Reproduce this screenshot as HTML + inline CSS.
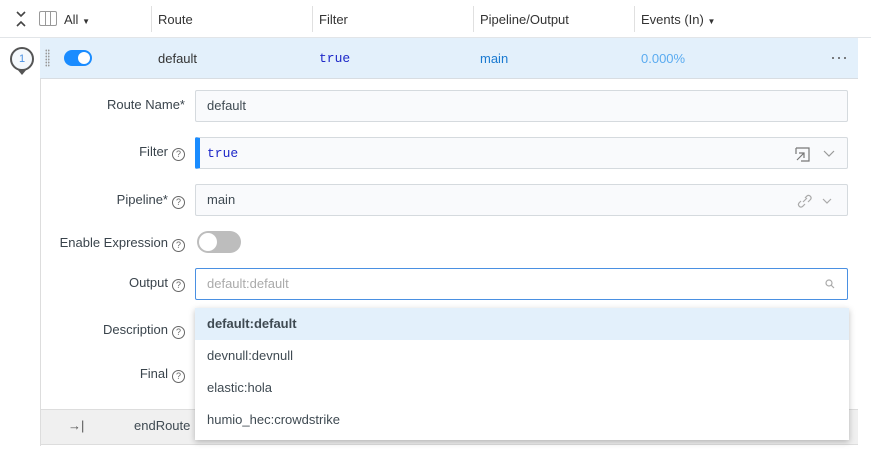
<!DOCTYPE html>
<html><head><style>
*{box-sizing:border-box;margin:0;padding:0}
body{width:871px;height:449px;background:#fff;font-family:"Liberation Sans",sans-serif;font-size:13px;color:#3f4a52;position:relative;overflow:hidden}
.a{position:absolute}
.hdr{top:0;left:0;width:871px;height:38px;border-bottom:1px solid #e2e5e8}
.hd{font-size:13px;color:#333;top:12px}
.sep{top:6px;width:1px;height:26px;background:#e0e0e0}
.row{top:38px;left:40px;width:818px;height:41px;background:#e3f0fb;border-bottom:1px solid #d8dde2}
.lbl{right:686px;font-size:13px;color:#3a444c;text-align:right;white-space:nowrap}
.q{display:inline-block;width:13px;height:13px;border:1px solid #666;border-radius:50%;font-size:9px;line-height:11px;text-align:center;vertical-align:-1px;margin-left:4px;color:#666}
.inp{left:195px;width:653px;height:32px;border:1px solid #d5dade;border-radius:2px;background:#f9fafc;padding:0 11px;line-height:30px}
.mono{font-family:"Liberation Mono",monospace;color:#1d27c8}
.dd{left:195px;top:308px;width:654px;height:132px;background:#fff;box-shadow:0 2px 6px rgba(0,0,0,.25)}
.opt{height:32px;line-height:32px;padding-left:12px}
</style></head><body>
<div class="a hdr"></div>
<svg class="a" style="left:14px;top:10px" width="14" height="18" viewBox="0 0 14 18" fill="none" stroke="#444" stroke-width="1.6"><path d="M3 2l4 4 4-4M3 16l4-4 4 4"/></svg>
<div class="a" style="left:39px;top:11px;width:18px;height:15px;border:1px solid #999;border-radius:2px"><div style="position:absolute;left:5px;top:0;width:1px;height:13px;background:#999"></div><div style="position:absolute;left:10px;top:0;width:1px;height:13px;background:#999"></div></div>
<div class="a hd" style="left:64px">All <span style="font-size:8px">&#9660;</span></div>
<div class="a sep" style="left:151px"></div><div class="a hd" style="left:158px">Route</div>
<div class="a sep" style="left:312px"></div><div class="a hd" style="left:319px">Filter</div>
<div class="a sep" style="left:473px"></div><div class="a hd" style="left:480px">Pipeline/Output</div>
<div class="a sep" style="left:634px"></div><div class="a hd" style="left:641px">Events (In) <span style="font-size:8px">&#9660;</span></div>
<div class="a" style="left:40px;top:38px;width:1px;height:408px;background:#ddd"></div>
<div class="a" style="left:40px;top:444px;width:818px;height:1px;background:#ddd"></div>
<div class="a row"></div>
<div class="a" style="left:10px;top:47px;width:24px;height:24px;border:2px solid #555;border-radius:50%;background:#f4f8fc;color:#4a90e2;font-size:11px;text-align:center;line-height:20px">1</div>
<div class="a" style="left:17px;top:69px;border-left:5px solid transparent;border-right:5px solid transparent;border-top:6px solid #555"></div>
<div class="a" style="left:45px;top:49px;width:5px;height:18px;background:radial-gradient(circle,#999 0.8px,transparent 1px) 0 0/2.5px 3px"></div>
<div class="a" style="left:64px;top:50px;width:28px;height:16px;border-radius:8px;background:#1a8cff"><div style="position:absolute;right:2px;top:2px;width:12px;height:12px;border-radius:50%;background:#fff"></div></div>
<div class="a" style="left:158px;top:51px;color:#333">default</div>
<div class="a mono" style="left:319px;top:51px;color:#1d27c8">true</div>
<div class="a" style="left:480px;top:51px;color:#1a7ad1">main</div>
<div class="a" style="left:641px;top:51px;color:#5aabf0">0.000%</div>
<svg class="a" style="left:831px;top:56px" width="16" height="4"><circle cx="2" cy="2" r="1" fill="#555"/><circle cx="8" cy="2" r="1" fill="#555"/><circle cx="14" cy="2" r="1" fill="#555"/></svg>

<div class="a lbl" style="top:97px">Route Name*</div>
<div class="a inp" style="top:90px">default</div>
<div class="a lbl" style="top:144px">Filter<span class="q">?</span></div>
<div class="a inp" style="top:137px;border-left:5px solid #1a8cff;padding-left:7px"><span class="mono">true</span>
<svg style="position:absolute;right:8px;top:8px" width="44" height="16" fill="none" stroke="#777" stroke-width="1.2"><path d="M1 2h13v13H6M1 2v6M2 14l7-7M4 7h5v5"/><path d="M29 5l5 5 5-5" stroke="#999"/></svg></div>
<div class="a lbl" style="top:192px">Pipeline*<span class="q">?</span></div>
<div class="a inp" style="top:184px">main
<svg style="position:absolute;right:10px;top:8px" width="40" height="16" fill="none" stroke="#aaa" stroke-width="1.2"><path d="M6 9l4-4M4 8l-2 2a2.5 2.5 0 003.5 3.5L8 11M8 5l2-2a2.5 2.5 0 013.5 3.5L11 9"/><path d="M26 6l4 4 4-4"/></svg></div>
<div class="a lbl" style="top:235px">Enable Expression<span class="q">?</span></div>
<div class="a" style="left:197px;top:231px;width:44px;height:22px;border-radius:11px;background:#bdbdbd"><div style="position:absolute;left:2px;top:2px;width:18px;height:18px;border-radius:50%;background:#fff"></div></div>
<div class="a lbl" style="top:275px">Output<span class="q">?</span></div>
<div class="a inp" style="top:268px;border-color:#4a90e2;background:#fff;color:#aaa">default:default
<svg style="position:absolute;right:12px;top:10px" width="10" height="10" fill="none" stroke="#aaa" stroke-width="1.2"><circle cx="4" cy="4" r="3"/><path d="M6 6l3 3"/></svg></div>
<div class="a lbl" style="top:322px">Description<span class="q">?</span></div>
<div class="a lbl" style="top:366px">Final<span class="q">?</span></div>
<div class="a" style="left:41px;top:409px;width:817px;height:35px;background:#f0f0f0;border-top:1px solid #ddd"></div>
<div class="a" style="left:68px;top:418px;color:#555">&#8594;|</div>
<div class="a" style="left:134px;top:418px">endRoute</div>
<div class="a dd">
<div class="opt" style="background:#e3f0fb;font-weight:bold">default:default</div>
<div class="opt">devnull:devnull</div>
<div class="opt">elastic:hola</div>
<div class="opt">humio_hec:crowdstrike</div>
</div>
</body></html>
